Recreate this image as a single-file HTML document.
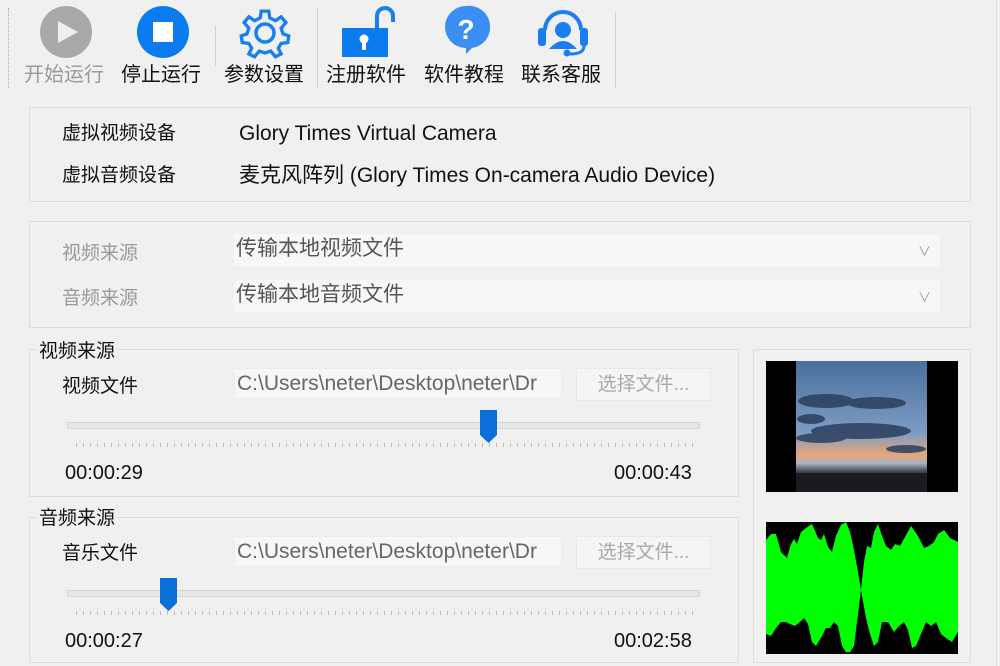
<!DOCTYPE html>
<html><head><meta charset="utf-8"><style>
*{margin:0;padding:0;box-sizing:border-box}
body{width:1000px;height:666px;background:#f0f0f0;position:relative;overflow:hidden;font-family:"Liberation Sans","Noto Sans CJK SC",sans-serif;color:#111;font-size:20px}
.a{position:absolute;white-space:nowrap;line-height:24px}
.box{position:absolute;border:1px solid #dcdcdc}
.lbl{font-size:19px}
.g{color:#9a9a9a}
.field{position:absolute;background:#f7f7f7;border:1px solid #ececec;color:#666;font-size:21px;line-height:30px;padding-left:2px;overflow:hidden;white-space:nowrap}
.btn{position:absolute;background:#f5f5f5;border:1px solid #e8e8e8;color:#aaa;font-size:19px;line-height:31px;text-align:center}
.track{position:absolute;height:7px;background:#e6e6e6;border:1px solid #d6d6d6}
.ticks{position:absolute;height:4px;background:repeating-linear-gradient(90deg,#bbb 0 1px,transparent 1px 7px)}
.sep{position:absolute;width:1px;background:#cfcfcf}
</style></head><body>
<div class="a" style="left:8px;top:8px;height:80px;border-left:1px dotted #aaa"></div>
<div class="sep" style="left:215px;top:26px;height:40px"></div>
<div class="sep" style="left:317px;top:8px;height:80px"></div>
<div class="sep" style="left:615px;top:12px;height:76px"></div>
<svg style="position:absolute;left:0;top:0" width="620" height="64">
 <circle cx="66" cy="32" r="26" fill="#a9a9a9"/><path d="M58 21 L78 32 L58 43Z" fill="#eee"/>
 <circle cx="163" cy="32" r="26" fill="#0a7cf0"/><rect x="153" y="22" width="20" height="20" fill="#fff"/>
 <g transform="translate(265,33)" fill="none" stroke="#1a7ef0" stroke-width="3.5">
  <path d="M-4,-23 L4,-23 L5,-16 L11,-13 L17,-17 L22,-11 L17,-5 L19,1 L25,3 L24,10 L17,11 L14,16 L17,22 L11,25 L6,19 L0,21 L-6,19 L-11,25 L-17,22 L-14,16 L-17,11 L-24,10 L-25,3 L-19,1 L-17,-5 L-22,-11 L-17,-17 L-11,-13 L-5,-16Z" transform="scale(0.95)"/>
  <circle r="9"/></g>
 <path d="M377 28 V16 a8 8 0 0 1 16 0 V22" fill="none" stroke="#1a7ef0" stroke-width="4"/>
 <rect x="342" y="28" width="46" height="29" fill="#0a7cf0"/>
 <circle cx="364" cy="39" r="4.5" fill="#fff"/><rect x="362" y="40" width="4" height="10" fill="#fff"/>
 <path d="M466 6 a20 20 0 1 0 0 42 l0 6 l6 -6 a20 20 0 0 0 -6 -42Z" fill="#3c8ef2"/>
 <text x="466" y="39" font-family="Liberation Sans" font-weight="bold" font-size="28" fill="#fff" text-anchor="middle">?</text>
 <path d="M545 30 a18 18 0 0 1 36 0" fill="none" stroke="#1a7ef0" stroke-width="4"/>
 <rect x="538" y="28" width="8" height="18" rx="3" fill="#1a7ef0"/><rect x="580" y="28" width="8" height="18" rx="3" fill="#1a7ef0"/>
 <circle cx="563" cy="30" r="8" fill="#1a7ef0"/><path d="M549 49 q14 -16 28 0Z" fill="#1a7ef0"/>
 <path d="M584 46 q0 8 -14 8" fill="none" stroke="#1a7ef0" stroke-width="3"/><circle cx="567" cy="53" r="3.5" fill="#1a7ef0"/>
</svg>
<div class="a g" style="left:24px;top:63px">开始运行</div>
<div class="a" style="left:121px;top:63px">停止运行</div>
<div class="a" style="left:224px;top:63px">参数设置</div>
<div class="a" style="left:326px;top:63px">注册软件</div>
<div class="a" style="left:424px;top:63px">软件教程</div>
<div class="a" style="left:521px;top:63px">联系客服</div>
<div class="box" style="left:29px;top:107px;width:942px;height:95px"></div>
<div class="a lbl" style="left:62px;top:122px">虚拟视频设备</div>
<div class="a" style="left:239px;top:122px;font-size:21px">Glory Times Virtual Camera</div>
<div class="a lbl" style="left:62px;top:164px">虚拟音频设备</div>
<div class="a" style="left:239px;top:164px;font-size:21px">麦克风阵列 (Glory Times On-camera Audio Device)</div>
<div class="box" style="left:29px;top:221px;width:942px;height:107px"></div>
<div class="a lbl g" style="left:62px;top:242px">视频来源</div>
<div class="field" style="left:234px;top:234px;width:706px;height:32px;border:none;color:#555">传输本地视频文件</div>
<div class="a g" style="left:918px;top:240px;font-size:13px">∨</div>
<div class="a lbl g" style="left:62px;top:287px">音频来源</div>
<div class="field" style="left:234px;top:280px;width:706px;height:32px;border:none;color:#555">传输本地音频文件</div>
<div class="a g" style="left:918px;top:286px;font-size:13px">∨</div>
<div class="box" style="left:29px;top:349px;width:710px;height:148px"></div>
<div class="a lbl" style="left:37px;top:340px;background:#f0f0f0;padding:0 2px">视频来源</div>
<div class="a lbl" style="left:62px;top:375px">视频文件</div>
<div class="field" style="left:234px;top:368px;width:328px;height:31px">C:\Users\neter\Desktop\neter\Dr</div>
<div class="btn" style="left:576px;top:368px;width:135px;height:33px">选择文件...</div>
<div class="track" style="left:67px;top:422px;width:633px"></div>
<svg style="position:absolute;left:480px;top:410px" width="18" height="34"><path d="M0 0H17V25L8.5 33L0 25Z" fill="#0a6fd8"/></svg>
<div class="ticks" style="left:76px;top:443px;width:618px"></div>
<div class="a" style="left:65px;top:461px">00:00:29</div>
<div class="a" style="left:614px;top:461px">00:00:43</div>
<div class="box" style="left:29px;top:517px;width:710px;height:146px"></div>
<div class="a lbl" style="left:37px;top:507px;background:#f0f0f0;padding:0 2px">音频来源</div>
<div class="a lbl" style="left:62px;top:542px">音乐文件</div>
<div class="field" style="left:234px;top:536px;width:328px;height:31px">C:\Users\neter\Desktop\neter\Dr</div>
<div class="btn" style="left:576px;top:536px;width:135px;height:33px">选择文件...</div>
<div class="track" style="left:67px;top:590px;width:633px"></div>
<svg style="position:absolute;left:160px;top:578px" width="18" height="34"><path d="M0 0H17V25L8.5 33L0 25Z" fill="#0a6fd8"/></svg>
<div class="ticks" style="left:76px;top:611px;width:618px"></div>
<div class="a" style="left:65px;top:629px">00:00:27</div>
<div class="a" style="left:614px;top:629px">00:02:58</div>
<div class="box" style="left:753px;top:349px;width:218px;height:314px"></div>
<svg style="position:absolute;left:766px;top:361px" width="192" height="131">
 <defs><linearGradient id="sky" x1="0" y1="0" x2="0" y2="1"><stop offset="0" stop-color="#4a6f9e"/><stop offset="0.55" stop-color="#7d9cc3"/><stop offset="0.72" stop-color="#e8a678"/><stop offset="0.78" stop-color="#a9b3c5"/><stop offset="0.85" stop-color="#3a3e48"/><stop offset="1" stop-color="#1c1e22"/></linearGradient></defs>
 <rect width="192" height="131" fill="#000"/>
 <rect x="30" width="131" height="131" fill="url(#sky)"/>
 <g fill="#2b3f5e" opacity="0.85"><ellipse cx="60" cy="40" rx="28" ry="7"/><ellipse cx="110" cy="42" rx="30" ry="6"/><ellipse cx="95" cy="70" rx="50" ry="8"/><ellipse cx="55" cy="77" rx="25" ry="5"/><ellipse cx="140" cy="88" rx="20" ry="4"/><ellipse cx="45" cy="58" rx="14" ry="5"/></g>
 <rect x="30" y="112" width="131" height="19" fill="#1a1b1e"/>
</svg>
<svg style="position:absolute;left:766px;top:522px" width="192" height="132" viewBox="0 0 192 132">
 <rect width="192" height="132" fill="#000"/>
 <path fill="#00ff00" d="M0 18 L5 12 L10 12 L15 30 L21 36 L25 22 L28 17 L31 22 L35 10 L40 6 L46 2 L52 16 L55 18 L58 12 L62 25 L66 30 L70 14 L75 3 L80 0 L84 10 L88 28 L92 50 L95 68 L98 40 L101 24 L105 26 L108 10 L112 2 L116 14 L120 24 L125 28 L129 22 L134 24 L139 15 L145 4 L152 14 L158 26 L163 24 L168 20 L172 12 L178 8 L184 16 L192 20 L192 110 L186 120 L180 116 L175 112 L170 100 L165 104 L160 100 L155 112 L150 124 L146 126 L142 108 L138 100 L133 104 L128 110 L122 100 L116 100 L112 120 L108 124 L104 112 L100 96 L95 68 L91 100 L88 124 L84 130 L80 130 L76 124 L72 104 L68 100 L64 106 L60 106 L56 114 L50 124 L46 120 L42 102 L38 96 L34 100 L29 104 L24 102 L20 100 L15 100 L10 106 L5 114 L0 112Z"/>
</svg>
<div class="sep" style="left:996px;top:0;height:666px;background:#ddd"></div>
</body></html>
